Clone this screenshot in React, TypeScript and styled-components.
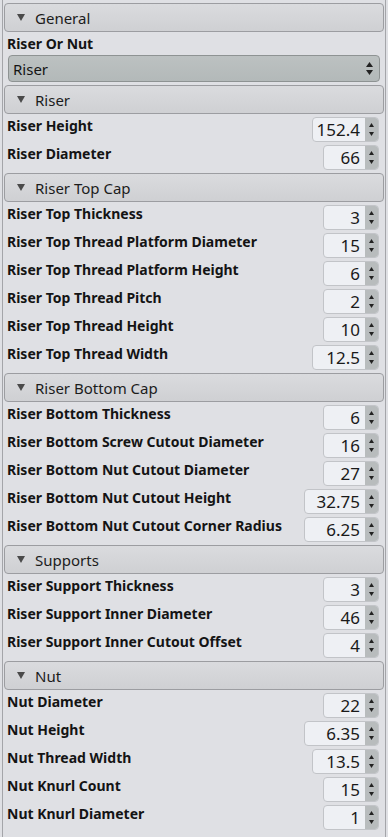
import React from 'react';
import styled, { createGlobalStyle } from 'styled-components';

const GlobalStyle = createGlobalStyle`
  html, body {
    margin: 0;
    padding: 0;
    background: #dfe0e4;
  }
  body {
    font-family: "Noto Sans", "Open Sans", sans-serif;
    color: #141414;
  }
`;

type Field = { label: string; value: string; size?: 's' | 'm' | 'l' };
type Section = { title: string; fields: Field[] };

const sections: Section[] = [
  {
    title: 'Riser',
    fields: [
      { label: 'Riser Height', value: '152.4', size: 'm' },
      { label: 'Riser Diameter', value: '66' },
    ],
  },
  {
    title: 'Riser Top Cap',
    fields: [
      { label: 'Riser Top Thickness', value: '3' },
      { label: 'Riser Top Thread Platform Diameter', value: '15' },
      { label: 'Riser Top Thread Platform Height', value: '6' },
      { label: 'Riser Top Thread Pitch', value: '2' },
      { label: 'Riser Top Thread Height', value: '10' },
      { label: 'Riser Top Thread Width', value: '12.5', size: 'm' },
    ],
  },
  {
    title: 'Riser Bottom Cap',
    fields: [
      { label: 'Riser Bottom Thickness', value: '6' },
      { label: 'Riser Bottom Screw Cutout Diameter', value: '16' },
      { label: 'Riser Bottom Nut Cutout Diameter', value: '27' },
      { label: 'Riser Bottom Nut Cutout Height', value: '32.75', size: 'l' },
      { label: 'Riser Bottom Nut Cutout Corner Radius', value: '6.25', size: 'l' },
    ],
  },
  {
    title: 'Supports',
    fields: [
      { label: 'Riser Support Thickness', value: '3' },
      { label: 'Riser Support Inner Diameter', value: '46' },
      { label: 'Riser Support Inner Cutout Offset', value: '4' },
    ],
  },
  {
    title: 'Nut',
    fields: [
      { label: 'Nut Diameter', value: '22' },
      { label: 'Nut Height', value: '6.35', size: 'l' },
      { label: 'Nut Thread Width', value: '13.5', size: 'm' },
      { label: 'Nut Knurl Count', value: '15' },
      { label: 'Nut Knurl Diameter', value: '1' },
    ],
  },
];

const widths = { s: 56, m: 67, l: 75 };

const Frame = styled.div`
  margin-left: 2px;
  width: 384px;
  min-height: 837px;
  box-sizing: border-box;
  border-left: 1px solid #a4a5a9;
  border-right: 1px solid #a4a5a9;
  padding: 3px 1px 0 1px;
  display: flex;
  flex-direction: column;
  gap: 3px;
`;

const Header = styled.div`
  height: 29px;
  box-sizing: border-box;
  border: 1px solid #9c9da1;
  border-radius: 4px;
  background: linear-gradient(#dadbde, #cfd0d3);
  display: flex;
  align-items: center;
  padding-left: 12px;
  gap: 10px;
  font-size: 15px;
  color: #1c1c1c;
`;

const Row = styled.div`
  height: 25px;
  display: flex;
  align-items: flex-start;
  justify-content: space-between;
  padding: 0 5px 0 3px;
`;

const Label = styled.div`
  font-weight: 700;
  font-size: 14px;
  line-height: 18px;
  white-space: nowrap;
`;

const LabelRow = styled.div`
  height: 17px;
  padding-left: 3px;
  font-weight: 700;
  font-size: 14px;
  line-height: 17px;
`;

const Combo = styled.div`
  height: 27px;
  box-sizing: border-box;
  margin: 0 4px 0 4px;
  border: 1px solid #8e9393;
  border-radius: 4px;
  background: linear-gradient(#bcc1c1, #b3b9b9);
  display: flex;
  align-items: center;
  justify-content: space-between;
  padding: 0 6px 0 4px;
  font-size: 15px;
`;

const Spin = styled.div<{ $w: number }>`
  width: ${(p) => p.$w}px;
  height: 25px;
  box-sizing: border-box;
  border: 1px solid #c2c4c8;
  border-radius: 4px;
  background: #eef0f4;
  display: flex;
  overflow: hidden;
`;

const SpinValue = styled.div`
  flex: 1;
  text-align: right;
  padding-right: 5px;
  font-size: 17px;
  line-height: 23px;
  color: #1a1a1a;
`;

const SpinButtons = styled.div`
  width: 13px;
  background: #b8bcbd;
  display: flex;
  flex-direction: column;
  align-items: center;
  justify-content: space-between;
  padding: 5px 0 5px;
`;

const ComboArrows = styled.div`
  display: flex;
  flex-direction: column;
  gap: 3px;
`;

const Arrow = ({ up, w = 6, h = 4, color = '#222' }: { up?: boolean; w?: number; h?: number; color?: string }) => (
  <svg width={w} height={h} viewBox={`0 0 ${w} ${h}`} style={{ display: 'block' }}>
    <polygon points={up ? `0,${h} ${w / 2},0 ${w},${h}` : `0,0 ${w},0 ${w / 2},${h}`} fill={color} />
  </svg>
);

const SectionHeader = ({ title }: { title: string }) => (
  <Header>
    <Arrow w={8} h={7} color="#4a4a4a" />
    <span>{title}</span>
  </Header>
);

const SpinBox = ({ value, size = 's' }: { value: string; size?: 's' | 'm' | 'l' }) => (
  <Spin $w={widths[size]}>
    <SpinValue>{value}</SpinValue>
    <SpinButtons>
      <Arrow up w={5} h={4} />
      <Arrow w={5} h={4} />
    </SpinButtons>
  </Spin>
);

export default function App() {
  return (
    <>
      <GlobalStyle />
      <Frame>
        <SectionHeader title="General" />
        <LabelRow>Riser Or Nut</LabelRow>
        <Combo>
          <span>Riser</span>
          <ComboArrows>
            <Arrow up w={7} h={5} />
            <Arrow w={7} h={5} />
          </ComboArrows>
        </Combo>
        {sections.map((s) => (
          <React.Fragment key={s.title}>
            <SectionHeader title={s.title} />
            {s.fields.map((f) => (
              <Row key={f.label}>
                <Label>{f.label}</Label>
                <SpinBox value={f.value} size={f.size} />
              </Row>
            ))}
          </React.Fragment>
        ))}
      </Frame>
    </>
  );
}
